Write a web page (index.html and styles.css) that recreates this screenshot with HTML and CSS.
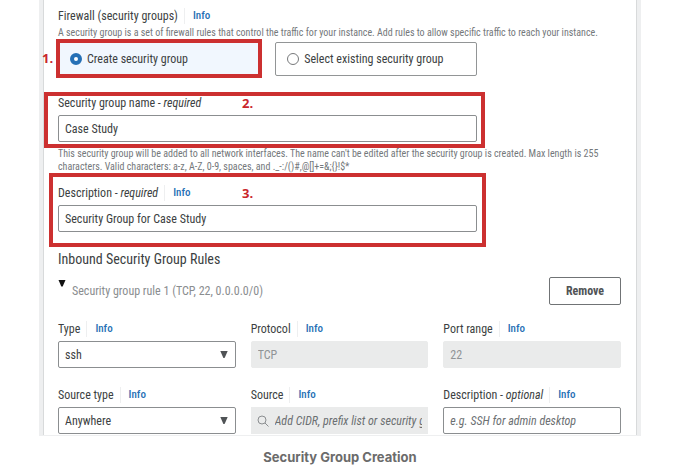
FILE: index.html
```html
<!DOCTYPE html>
<html lang="en">
<head>
<meta charset="utf-8">
<title>Security Group Creation</title>
<link rel="stylesheet" href="styles.css">
</head>
<body>
<figure class="figure">
  <form class="panel">
    <fieldset class="group firewall">
      <legend class="label">Firewall (security groups) <a class="info" href="#firewall">Info</a></legend>
      <p class="hint">A security group is a set of firewall rules that control the traffic for your instance. Add rules to allow specific traffic to reach your instance.</p>
      <div class="tiles">
        <label class="tile selected"><input type="radio" name="mode" checked>Create security group<span class="mark mark-one"><b class="step">1.</b></span></label>
        <label class="tile"><input type="radio" name="mode">Select existing security group</label>
      </div>
    </fieldset>

    <div class="group name">
      <div class="field wide">
        <div class="label"><label for="name">Security group name - <i>required</i></label></div>
        <input class="control" id="name" type="text" value="Case Study">
        <span class="mark mark-two"><b class="step">2.</b></span>
      </div>
      <p class="hint">This security group will be added to all network interfaces. The name can't be edited after the security group is created. Max length is 255 characters. Valid characters: a-z, A-Z, 0-9, spaces, and ._-:/()#,@[]+=&amp;;{}!$*</p>
    </div>

    <div class="field wide about">
      <div class="label"><label for="about">Description - <i>required</i></label><a class="info" href="#about">Info</a></div>
      <input class="control" id="about" type="text" value="Security Group for Case Study">
      <span class="mark mark-three"><b class="step">3.</b></span>
    </div>

    <h2 class="heading">Inbound Security Group Rules</h2>
    <div class="rule">
      <svg class="caret" viewBox="0 0 8 8" aria-hidden="true"><path d="M.5 0h7L4.700 6.500H3.300z"/></svg>
      <span class="rule-name">Security group rule 1 (TCP, 22, 0.0.0.0/0)</span>
      <button class="remove" type="button">Remove</button>
    </div>

    <div class="grid">
      <div class="field">
        <div class="label"><label for="type">Type</label><a class="info" href="#type">Info</a></div>
        <div class="picker">
          <select class="control" id="type"><option>ssh</option></select>
          <svg class="arrow" viewBox="0 0 8 8" aria-hidden="true"><path d="M.3 0h7.400L4.600 7H3.400z"/></svg>
        </div>
      </div>
      <div class="field">
        <div class="label"><label for="protocol">Protocol</label><a class="info" href="#protocol">Info</a></div>
        <input class="control" id="protocol" type="text" value="TCP" disabled>
      </div>
      <div class="field">
        <div class="label"><label for="port">Port range</label><a class="info" href="#port">Info</a></div>
        <input class="control" id="port" type="text" value="22" disabled>
      </div>
      <div class="field">
        <div class="label"><label for="source-type">Source type</label><a class="info" href="#source-type">Info</a></div>
        <div class="picker">
          <select class="control" id="source-type"><option>Anywhere</option></select>
          <svg class="arrow" viewBox="0 0 8 8" aria-hidden="true"><path d="M.3 0h7.400L4.600 7H3.400z"/></svg>
        </div>
      </div>
      <div class="field">
        <div class="label"><label for="source">Source</label><a class="info" href="#source">Info</a></div>
        <div class="search">
          <svg class="lens" viewBox="0 0 12 12" aria-hidden="true"><circle cx="5" cy="5" r="4"/><path d="M8 8l3.500 3.500"/></svg>
          <input class="query" id="source" type="text" placeholder="Add CIDR, prefix list or security group" disabled>
        </div>
      </div>
      <div class="field">
        <div class="label"><label for="note">Description - <i>optional</i></label><a class="info" href="#note">Info</a></div>
        <input class="control" id="note" type="text" placeholder="e.g. SSH for admin desktop">
      </div>
    </div>
  </form>
  <figcaption class="caption">Security Group Creation</figcaption>
</figure>
</body>
</html>
```
FILE: styles.css
```css
* { box-sizing: border-box; }

body {
  margin: 0;
  background: #fff;
  color: #3c3f42;
  font: 12px/16px "Roboto Condensed", Roboto, sans-serif;
}

.figure { margin: 0 39px; }

.panel {
  padding: 8px 16px 1px 15px;
  border: solid #eeeff0;
  border-width: 0 4px 1px;
  box-shadow: inset 1px 0 #d8dadb, inset -1px 0 #d8dadb;
}

.group { margin: 0; padding: 0; border: 0; min-width: 0; }

.label { display: flex; align-items: center; padding: 0; height: 16px; white-space: nowrap; }

.info {
  margin-left: 6px;
  padding-left: 8px;
  border-left: 1px solid #eeeff0;
  color: #2670b5;
  font-size: 11px;
  font-weight: 500;
  text-decoration: none;
}

.hint { margin: 0; color: #74787b; font-size: 10px; line-height: 13px; }

.firewall .hint { margin: 2px 0 3px; white-space: nowrap; }

.tiles { display: grid; grid-template-columns: 1fr 1fr; gap: 15px; }

.tiles, .wide { width: 74.5%; }

.tile {
  position: relative;
  display: flex;
  align-items: center;
  gap: 5px;
  height: 34px;
  padding: 0 11px;
  border: 1px solid #929596;
  border-radius: 2px;
  white-space: nowrap;
}

.selected { background: #f1f7fe; border-color: #2670b5; }

.tile input {
  appearance: none;
  width: 12px;
  height: 12px;
  margin: 0;
  border: 1px solid #77797b;
  border-radius: 50%;
  background: #fff;
}

.tile input:checked { border: 4px solid #2670b5; }

.name { margin-top: 19px; }
.name .hint { margin-top: 5px; }

.field { display: flex; flex-direction: column; gap: 4px; min-width: 0; position: relative; }

.control {
  width: 100%;
  height: 27px;
  margin: 0;
  padding: 0 6px;
  border: 1px solid #8b8e90;
  border-radius: 2px;
  background: #fff;
  color: inherit;
  font: inherit;
  appearance: none;
}

.control:disabled { border-color: #eaebeb; background: #eaebeb; color: #909496; }

::placeholder { color: #6c7072; font-style: italic; opacity: 1; }

.about { margin-top: 12px; }

.mark { position: absolute; border: 4px solid #cc3030; pointer-events: none; }
.mark-one { inset: -4px -3px -3px -3px; }
.mark-two { inset: -3px -8px -6px -14px; }
.mark-three { inset: -12px -9px -15px -9px; }

.step { position: absolute; color: #c9252b; font: bold 13px/16px "Open Sans", sans-serif; }
.mark-one .step { top: 7px; left: -18px; }
.mark-two .step { top: -1px; left: 194px; }
.mark-three .step { top: 8px; left: 189px; }

.heading { margin: 18px 0 9px; font-size: 14px; font-weight: 400; line-height: 18px; }

.rule { display: flex; align-items: center; gap: 6px; height: 28px; }
.caret { width: 8px; height: 8px; margin-top: 3px; align-self: flex-start; fill: #111; }
.rule-name { color: #8a8d8f; }

.remove {
  width: 72px;
  height: 28px;
  margin-left: auto;
  padding: 0;
  border: 1px solid #707375;
  border-radius: 2px;
  background: #fff;
  color: #505356;
  font: inherit;
  font-weight: 700;
}

.grid { display: grid; grid-template-columns: repeat(3, 1fr); gap: 19px 15px; margin-top: 16px; }

.picker { position: relative; height: 27px; }
.arrow { position: absolute; top: 10px; right: 8px; width: 8px; height: 8px; fill: #505356; pointer-events: none; }

.search { display: flex; align-items: center; gap: 6px; height: 27px; padding: 0 6px; background: #eaebeb; }
.lens { flex: none; width: 12px; height: 12px; fill: none; stroke: #8b8e90; }
.query { flex: 1; min-width: 0; padding: 0; border: 0; background: none; font: inherit; }

.caption {
  margin-top: 13px;
  color: #6b6b6b;
  font: bold 13px/16px Inter, sans-serif;
  text-align: center;
}
```
